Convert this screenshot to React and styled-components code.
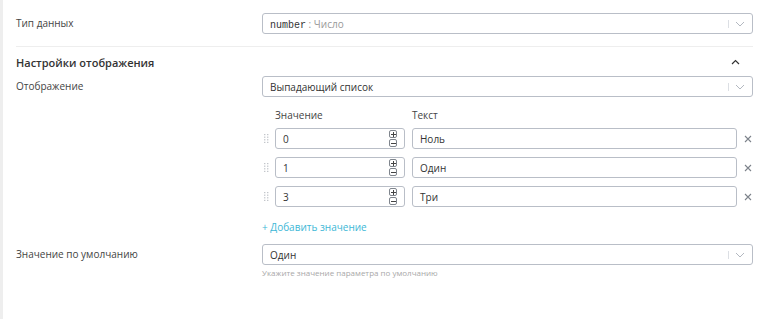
import React from 'react'
import styled, { createGlobalStyle } from 'styled-components'

const GlobalStyle = createGlobalStyle`
  html, body {
    margin: 0;
    padding: 0;
    background: #fff;
  }
  body {
    font-family: 'Open Sans', 'Noto Sans', sans-serif;
    font-size: 10px;
    color: #333;
  }
`

const Page = styled.div`
  min-height: 319px;
  box-sizing: border-box;
  border-left: 3px solid #eeeeee;
  padding: 13px 15px 0 13px;
`

const FieldRow = styled.div`
  display: grid;
  grid-template-columns: 246px 1fr;
  align-items: ${(p) => (p.top ? 'start' : 'center')};
  margin-top: ${(p) => p.mt || 0}px;
`

const Label = styled.div`
  color: #444;
  line-height: 21px;
`

const Select = styled.div`
  height: 21px;
  box-sizing: border-box;
  border: 1px solid #b9bec7;
  border-radius: 3px;
  display: flex;
  align-items: center;
  padding: 0 0 0 7px;
  color: #333;
`

const SelectValue = styled.div`
  flex: 1;
  white-space: nowrap;
`

const Mono = styled.span`
  font-family: 'Liberation Mono', monospace;
  font-size: 10px;
  color: #333;
`

const Muted = styled.span`
  color: #999;
`

const Indicators = styled.div`
  display: flex;
  align-items: center;
  height: 100%;
`

const Sep = styled.span`
  width: 1px;
  height: 8px;
  background: #dcdfe4;
  margin-right: 6px;
`

const Divider = styled.div`
  height: 1px;
  background: #eeeeee;
  margin: 12px 0 0 0;
`

const SectionHeader = styled.div`
  display: flex;
  align-items: center;
  justify-content: space-between;
  margin-top: 7px;
  height: 16px;
`

const Heading = styled.div`
  font-weight: 600;
  font-size: 11px;
  color: #333;
`

const Collapse = styled.span`
  display: flex;
  margin-right: 13px;
`

const Table = styled.div`
  grid-column: 2;
  margin-top: 11px;
`

const HeadRow = styled.div`
  display: grid;
  grid-template-columns: 13px 130px 7px 1fr 16px;
  line-height: 14px;
  color: #444;
  margin-bottom: 6px;
`

const ValueRow = styled.div`
  display: grid;
  grid-template-columns: 13px 130px 7px 1fr 16px;
  align-items: center;
  height: 21px;
  margin-bottom: 8px;
`

const Handle = styled.span`
  display: flex;
  justify-content: flex-start;
  padding-left: 2px;
`

const Input = styled.div`
  grid-column: ${(p) => p.col};
  height: 21px;
  box-sizing: border-box;
  border: 1px solid #b9bec7;
  border-radius: 3px;
  display: flex;
  align-items: center;
  padding: 0 0 0 7px;
  color: #333;
`

const InputText = styled.span`
  flex: 1;
`

const Spinner = styled.div`
  display: flex;
  flex-direction: column;
  gap: 1px;
  margin-right: 7px;
`

const SpinBtn = styled.span`
  width: 8px;
  height: 8px;
  box-sizing: border-box;
  border: 1px solid #7f858d;
  border-radius: 2px;
  display: flex;
  align-items: center;
  justify-content: center;
`

const Remove = styled.span`
  display: flex;
  justify-content: flex-end;
  padding-right: 1px;
`

const AddLink = styled.div`
  color: #3db7d6;
  margin-top: 13px;
  line-height: 14px;
`

const Hint = styled.div`
  font-size: 8px;
  color: #a8a8a8;
  margin-top: 2px;
  line-height: 12px;
`

const Chevron = () => (
  <svg width="10" height="6" viewBox="0 0 10 6" style={{ marginRight: 7 }}>
    <path d="M1 1l4 4 4-4" fill="none" stroke="#b3b8c0" strokeWidth="1" />
  </svg>
)

const Caret = () => (
  <svg width="9" height="6" viewBox="0 0 9 6">
    <path d="M1 5l3.5-3.5L8 5" fill="none" stroke="#333" strokeWidth="1.2" />
  </svg>
)

const Grip = () => (
  <svg width="5" height="9" viewBox="0 0 5 9">
    {[0, 2.6, 5.2, 7.8].map((y) => (
      <g key={y}>
        <rect x="0" y={y} width="1.4" height="1.2" fill="#c3c6cb" />
        <rect x="3" y={y} width="1.4" height="1.2" fill="#c3c6cb" />
      </g>
    ))}
  </svg>
)

const Cross = () => (
  <svg width="8" height="8" viewBox="0 0 8 8">
    <path d="M1 1l6 6M7 1l-6 6" stroke="#7d838b" strokeWidth="1.1" />
  </svg>
)

const Plus = () => (
  <svg width="5" height="5" viewBox="0 0 5 5">
    <path d="M0 2.5h5M2.5 0v5" stroke="#444" strokeWidth="1" />
  </svg>
)

const Minus = () => (
  <svg width="5" height="5" viewBox="0 0 5 5">
    <path d="M0 2.5h5" stroke="#444" strokeWidth="1" />
  </svg>
)

function SelectBox ({ children }) {
  return (
    <Select>
      <SelectValue>{children}</SelectValue>
      <Indicators>
        <Sep />
        <Chevron />
      </Indicators>
    </Select>
  )
}

const options = [
  { value: '0', text: 'Ноль' },
  { value: '1', text: 'Один' },
  { value: '3', text: 'Три' }
]

export default function App () {
  return (
    <>
      <GlobalStyle />
      <Page>
        <FieldRow>
          <Label>Тип данных</Label>
          <SelectBox>
            <Mono>number</Mono>
            <Muted> : Число</Muted>
          </SelectBox>
        </FieldRow>

        <Divider />

        <SectionHeader>
          <Heading>Настройки отображения</Heading>
          <Collapse><Caret /></Collapse>
        </SectionHeader>

        <FieldRow mt={6}>
          <Label>Отображение</Label>
          <SelectBox>Выпадающий список</SelectBox>
        </FieldRow>

        <FieldRow>
          <Table>
            <HeadRow>
              <span />
              <span>Значение</span>
              <span />
              <span>Текст</span>
            </HeadRow>
            {options.map((o) => (
              <ValueRow key={o.value}>
                <Handle><Grip /></Handle>
                <Input col={2}>
                  <InputText>{o.value}</InputText>
                  <Spinner>
                    <SpinBtn><Plus /></SpinBtn>
                    <SpinBtn><Minus /></SpinBtn>
                  </Spinner>
                </Input>
                <Input col={4}>
                  <InputText>{o.text}</InputText>
                </Input>
                <Remove><Cross /></Remove>
              </ValueRow>
            ))}
            <AddLink>+ Добавить значение</AddLink>
          </Table>
        </FieldRow>

        <FieldRow mt={10} top>
          <Label>Значение по умолчанию</Label>
          <div>
            <SelectBox>Один</SelectBox>
            <Hint>Укажите значение параметра по умолчанию</Hint>
          </div>
        </FieldRow>
      </Page>
    </>
  )
}
